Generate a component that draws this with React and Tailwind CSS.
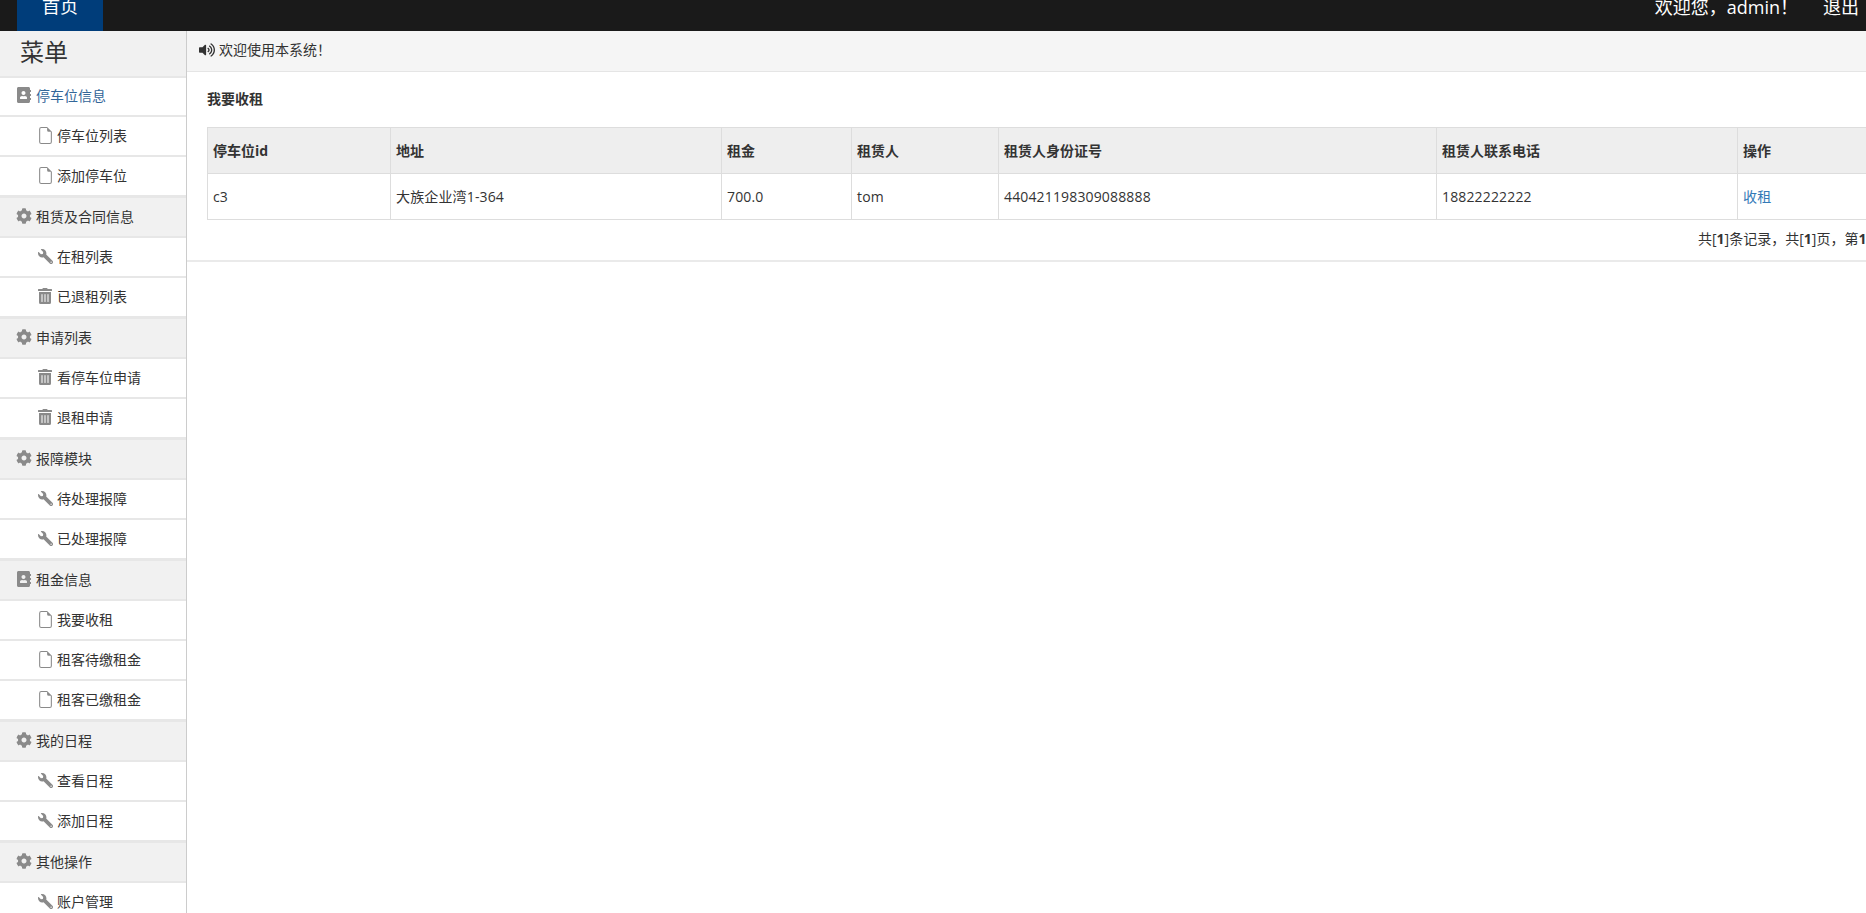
import { FaAddressBook, FaCog, FaTrashAlt, FaVolumeUp, FaWrench } from 'react-icons/fa'
import { BsFileEarmark } from 'react-icons/bs'

const menu = [
  { title: '停车位信息', icon: 'book', active: true, items: [['停车位列表', 'file'], ['添加停车位', 'file']] },
  { title: '租赁及合同信息', icon: 'cog', items: [['在租列表', 'wrench'], ['已退租列表', 'trash']] },
  { title: '申请列表', icon: 'cog', items: [['看停车位申请', 'trash'], ['退租申请', 'trash']] },
  { title: '报障模块', icon: 'cog', items: [['待处理报障', 'wrench'], ['已处理报障', 'wrench']] },
  { title: '租金信息', icon: 'book', items: [['我要收租', 'file'], ['租客待缴租金', 'file'], ['租客已缴租金', 'file']] },
  { title: '我的日程', icon: 'cog', items: [['查看日程', 'wrench'], ['添加日程', 'wrench']] },
  { title: '其他操作', icon: 'cog', items: [['账户管理', 'wrench']] },
]

const columns = [
  ['停车位id', 'w-[183px]', 'c3'],
  ['地址', 'w-[331px]', '大族企业湾1-364'],
  ['租金', 'w-[130px]', '700.0'],
  ['租赁人', 'w-[147px]', 'tom'],
  ['租赁人身份证号', 'w-[438px]', '440421198309088888'],
  ['租赁人联系电话', 'w-[301px]', '18822222222'],
  ['操作', 'w-[160px]', '收租'],
]

function MenuIcon({ name }) {
  let icon = <BsFileEarmark size={17} className="shrink-0" />
  if (name === 'book') icon = <FaAddressBook size={16} className="shrink-0" />
  if (name === 'cog') icon = <FaCog size={16} className="shrink-0" />
  if (name === 'wrench') icon = <FaWrench size={15} className="shrink-0 -scale-x-100" />
  if (name === 'trash') icon = <FaTrashAlt size={16} className="shrink-0" />
  return <span className="mt-[-2px] flex w-[14px] shrink-0 justify-center text-[#8a8a8a]">{icon}</span>
}

function Sidebar() {
  return (
    <aside className="w-[187px] h-[900px] shrink-0 border-r border-[#cccccc] bg-white">
      <div className="h-[45px] bg-[#f1f1f1] pl-[20px] text-2xl leading-[42px] text-[#333333]">菜单</div>
      {menu.map((group, i) => (
        <div key={group.title}>
          <div
            className={`flex h-[41px] items-center gap-[5px] border-b-2 border-[#e7e7e7] pl-[17px] ${
              group.active ? 'bg-white pb-[1px] text-[#336699]' : 'bg-[#f1f1f1] text-[#333333]'
            } ${i === 0 ? 'border-t-2' : 'border-t'}`}
          >
            <MenuIcon name={group.icon} />
            <span>{group.title}</span>
          </div>
          {group.items.map(([label, icon]) => (
            <div key={label} className="flex h-[40px] items-center gap-[5px] border-b-2 border-[#e7e7e7] pl-[38px] text-[#333333]">
              <MenuIcon name={icon} />
              <span>{label}</span>
            </div>
          ))}
        </div>
      ))}
    </aside>
  )
}

export default function App() {
  return (
    <div className="h-[913px] w-[1866px] overflow-hidden bg-white text-sm font-['Open_Sans','Noto_Sans_CJK_SC',sans-serif] text-[#333333]">
      <nav className="mt-[-19px] flex h-[50px] justify-between bg-[#1a1a1a] text-lg text-white">
        <div className="ml-[17px] flex h-full w-[86px] items-center justify-center bg-[#003d7a]">首页</div>
        <div className="flex gap-[25px] pr-[7px] pt-[12px]">
          <span>欢迎您，admin！</span>
          <span>退出</span>
        </div>
      </nav>
      <div className="flex">
        <Sidebar />
        <main className="min-w-0 flex-1">
          <div className="flex h-[41px] items-center gap-[4px] border-b border-[#e5e5e5] bg-[#f5f5f5] pb-[2px] pl-[12px]">
            <FaVolumeUp size={16} className="text-[#333333]" />
            <span>欢迎使用本系统！</span>
          </div>
          <div className="border-b-2 border-[#eaeaea] pb-[11px] pl-[20px] pt-[17px]">
            <h2 className="h-[38px] text-[14px] font-bold leading-[20px]">我要收租</h2>
            <div className="w-[1701px] border border-[#dddddd]">
              <div className="flex h-[46px] border-b border-[#dddddd] bg-[#eeeeee] text-[14px] font-bold">
                {columns.map(([head, width]) => (
                  <div key={head} className={`${width} flex shrink-0 items-center border-r border-[#dddddd] pl-[5px]`}>{head}</div>
                ))}
              </div>
              <div className="flex h-[45px]">
                {columns.map(([head, width, value]) => (
                  <div key={head} className={`${width} flex shrink-0 items-center border-r border-[#dddddd] pl-[5px] tracking-[0.15px] ${head === '操作' ? 'text-[#337ab7]' : ''}`}>{value}</div>
                ))}
              </div>
            </div>
            <div className="mt-[9px] w-[1701px] whitespace-nowrap pl-[1491px] text-[#333333]">
              共[<b>1</b>]条记录，共[<b>1</b>]页，第<b>1</b>页
            </div>
          </div>
        </main>
      </div>
    </div>
  )
}
